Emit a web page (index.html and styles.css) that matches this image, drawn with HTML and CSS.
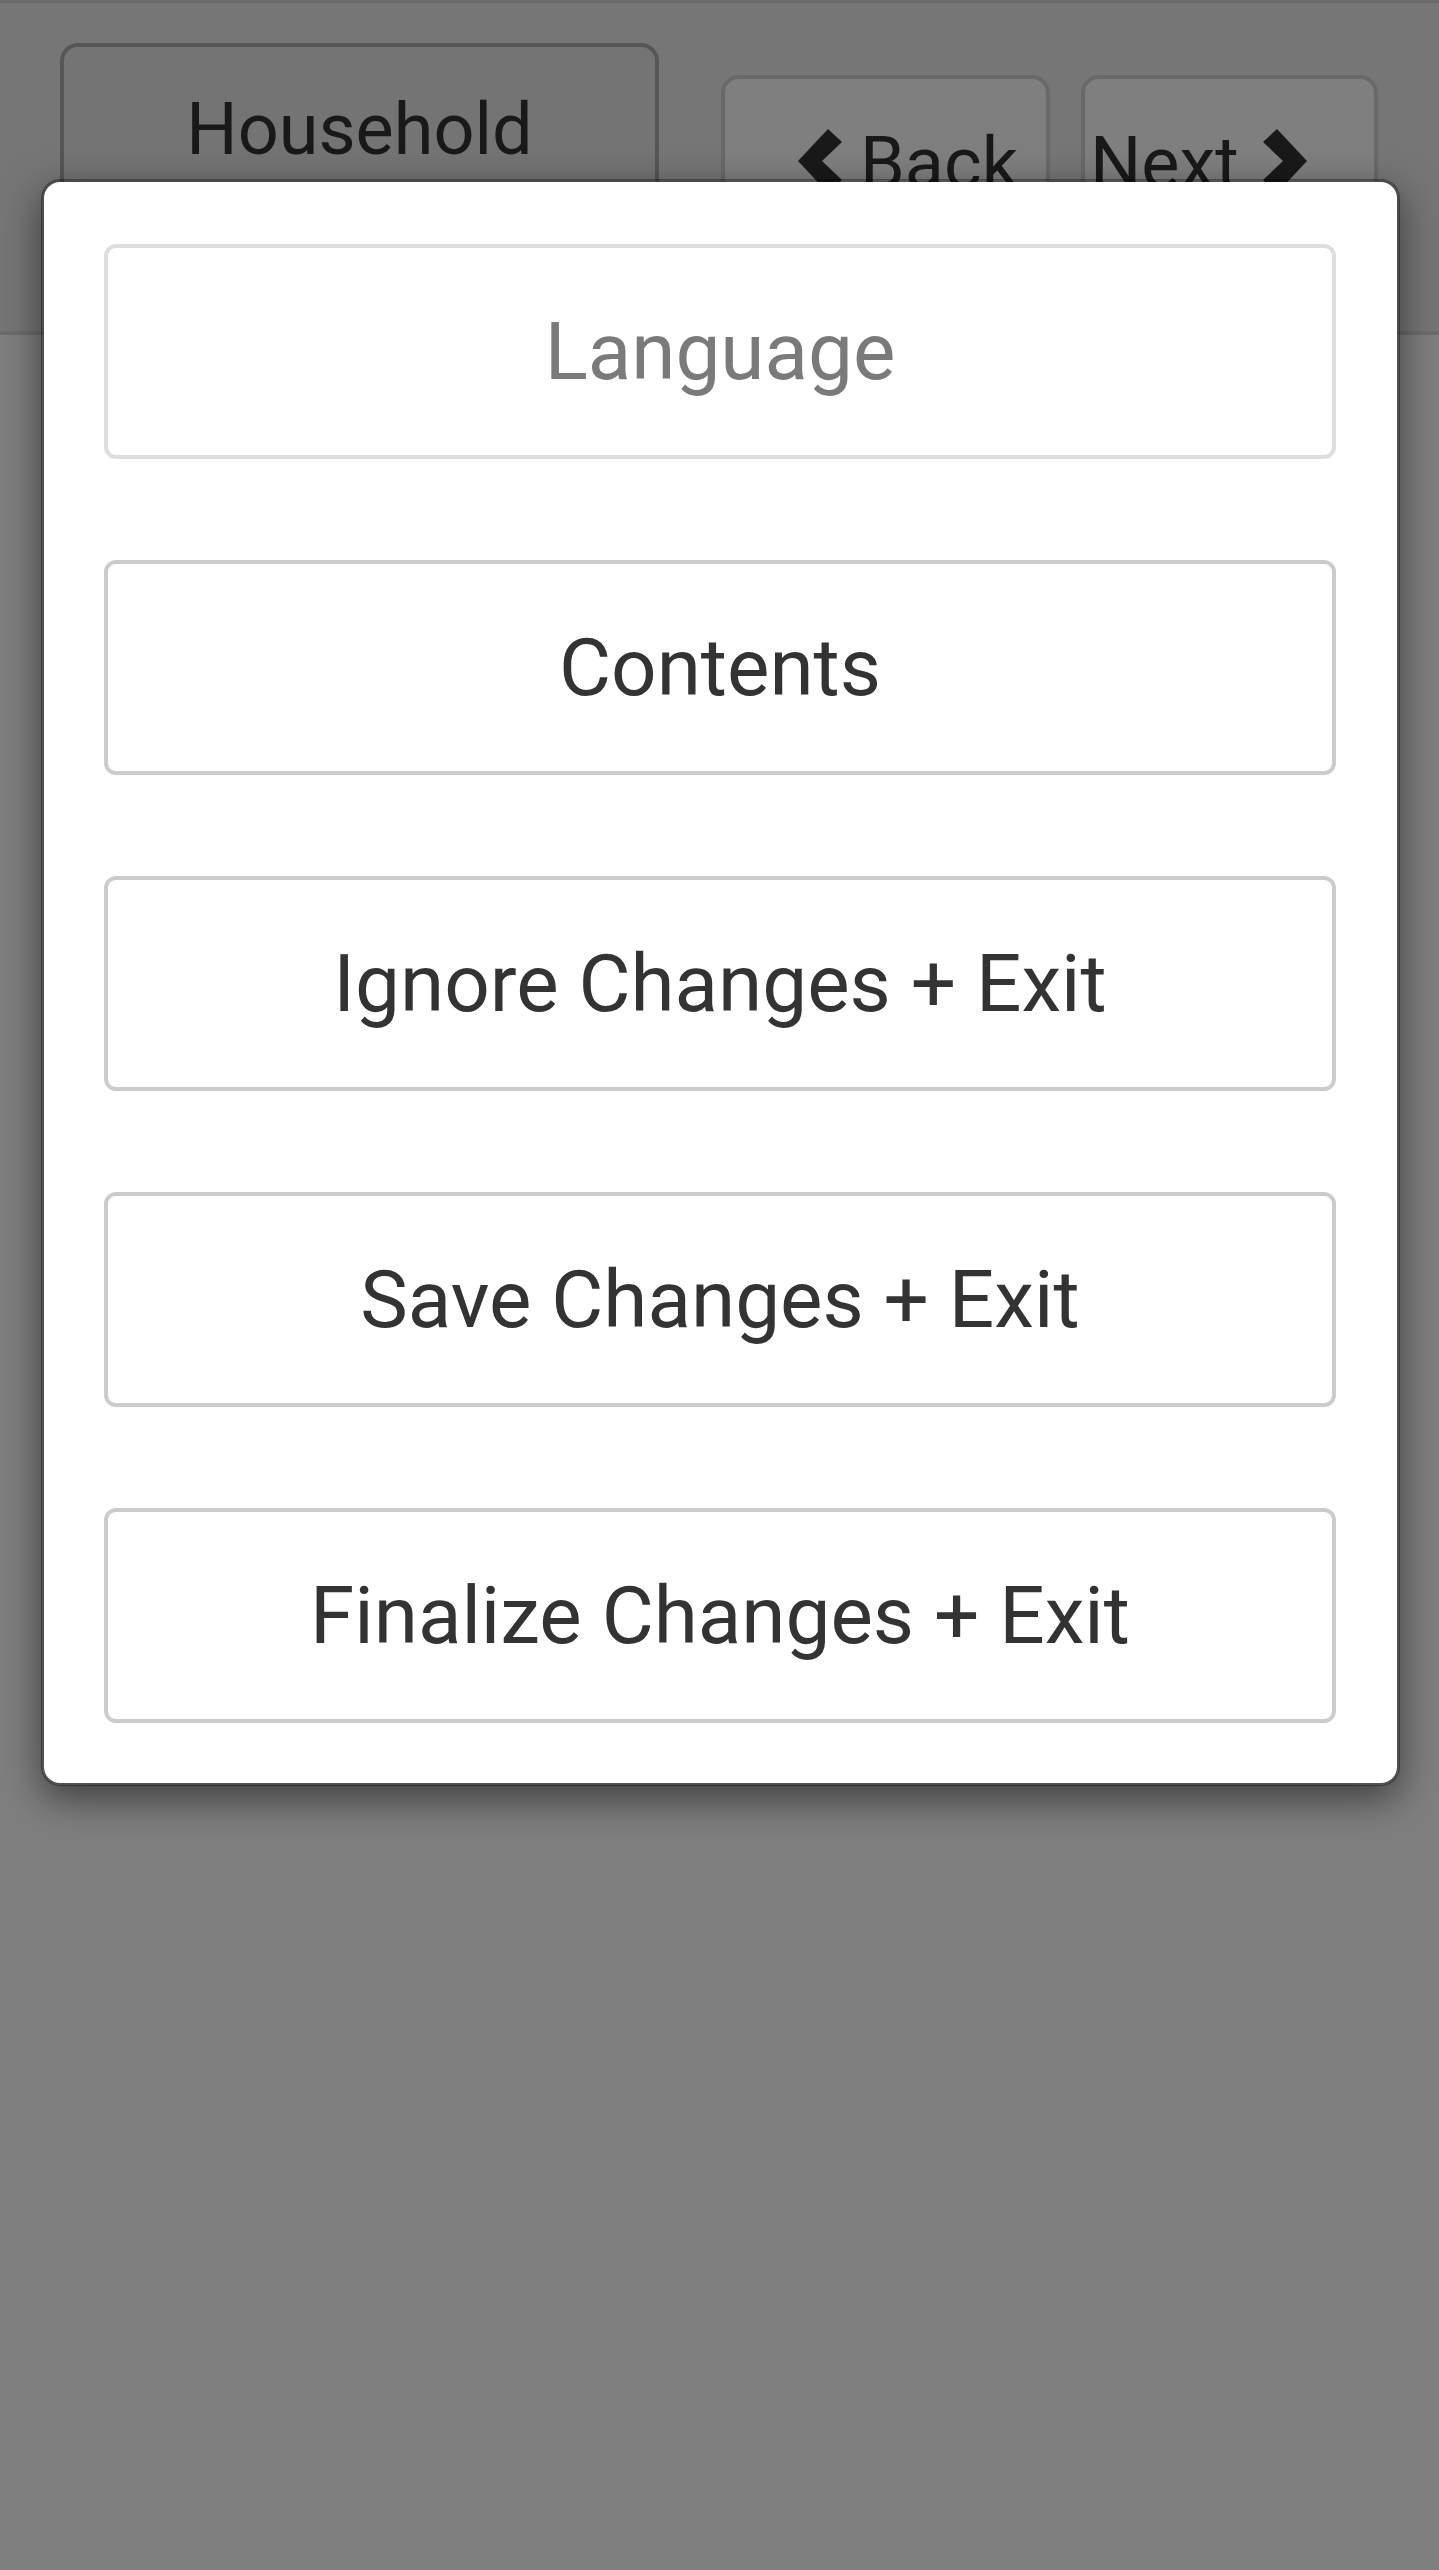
FILE: index.html
```html
<!DOCTYPE html>
<html lang="en">
<head>
<meta charset="utf-8">
<title>Menu</title>
<link rel="stylesheet" href="styles.css">
</head>
<body>
<header class="topbar">
  <div class="btn-head btn-household"><span class="lbl">Household</span></div>
  <div class="btn-head btn-back">
    <svg class="chev" width="44" height="64" viewBox="0 0 44 64"><polygon points="0,32 30,0 44,13 24,32 44,51 30,64" fill="#333"/></svg>
    <span class="lbl">Back</span>
  </div>
  <div class="btn-head btn-next">
    <span class="lbl">Next</span>
    <svg class="chev" width="44" height="64" viewBox="0 0 44 64"><polygon points="44,32 14,0 0,13 20,32 0,51 14,64" fill="#333"/></svg>
  </div>
</header>
<main class="page"></main>

<div class="backdrop"></div>
<div class="modal">
  <div class="modal-body">
    <button class="menu-btn disabled">Language</button>
    <button class="menu-btn">Contents</button>
    <button class="menu-btn">Ignore Changes + Exit</button>
    <button class="menu-btn">Save Changes + Exit</button>
    <button class="menu-btn">Finalize Changes + Exit</button>
  </div>
</div>
</body>
</html>
```
FILE: styles.css
```css
* { box-sizing: border-box; }
html, body { margin: 0; padding: 0; }
body {
  font-family: Roboto, "Noto Sans", "Liberation Sans", sans-serif;
  background: #fff;
  color: #333;
  width: 1439px;
  height: 2570px;
  overflow: hidden;
}
.topbar {
  height: 335px;
  background: #ececec;
  border-top: 3px solid #d6d6d6;
  border-bottom: 4px solid #dadada;
  display: flex;
  align-items: flex-start;
  padding: 40px 0 0 60px;
}
.btn-head {
  border: 4px solid #bdbdbd;
  border-radius: 18px;
  background: #fff;
  display: flex;
  align-items: center;
  font-size: 72px;
  line-height: 72px;
  color: #333;
}
.btn-household {
  width: 599px;
  height: 250px;
  background: #e8e8e8;
  border-color: #adadad;
  justify-content: center;
  padding-top: 47px;
  align-items: flex-start;
}
.btn-back {
  margin: 32px 0 0 62px;
  width: 329px;
  height: 230px;
  border-color: #d2d2d2;
  align-items: flex-start;
  padding: 49px 0 0 73px;
  gap: 18px;
}
.btn-next {
  margin: 32px 0 0 31px;
  width: 297px;
  height: 230px;
  border-color: #d2d2d2;
  align-items: flex-start;
  padding: 49px 0 0 5px;
  gap: 24px;
}
.chev { display: block; margin-top: 1px; flex: none; }
.page { height: 2232px; }

.backdrop {
  position: fixed;
  inset: 0;
  background: rgba(0, 0, 0, 0.5);
}
.modal {
  position: absolute;
  left: 41px;
  top: 179px;
  width: 1359px;
  border: 3px solid rgba(0, 0, 0, 0.35);
  border-radius: 19px;
  background: #fff;
  background-clip: padding-box;
  box-shadow: 0 13px 39px rgba(0, 0, 0, 0.5);
}
.modal-body {
  display: flex;
  flex-direction: column;
  gap: 101px;
  padding: 62px 61px 60px 60px;
}
.menu-btn {
  height: 215px;
  width: 100%;
  background: #fff;
  border: 4px solid #ccc;
  border-radius: 12px;
  font-family: Roboto, "Noto Sans", "Liberation Sans", sans-serif;
  font-size: 80px;
  color: #333;
  padding: 0;
  display: flex;
  align-items: center;
  justify-content: center;
}
.menu-btn.disabled { opacity: 0.65; }
```
